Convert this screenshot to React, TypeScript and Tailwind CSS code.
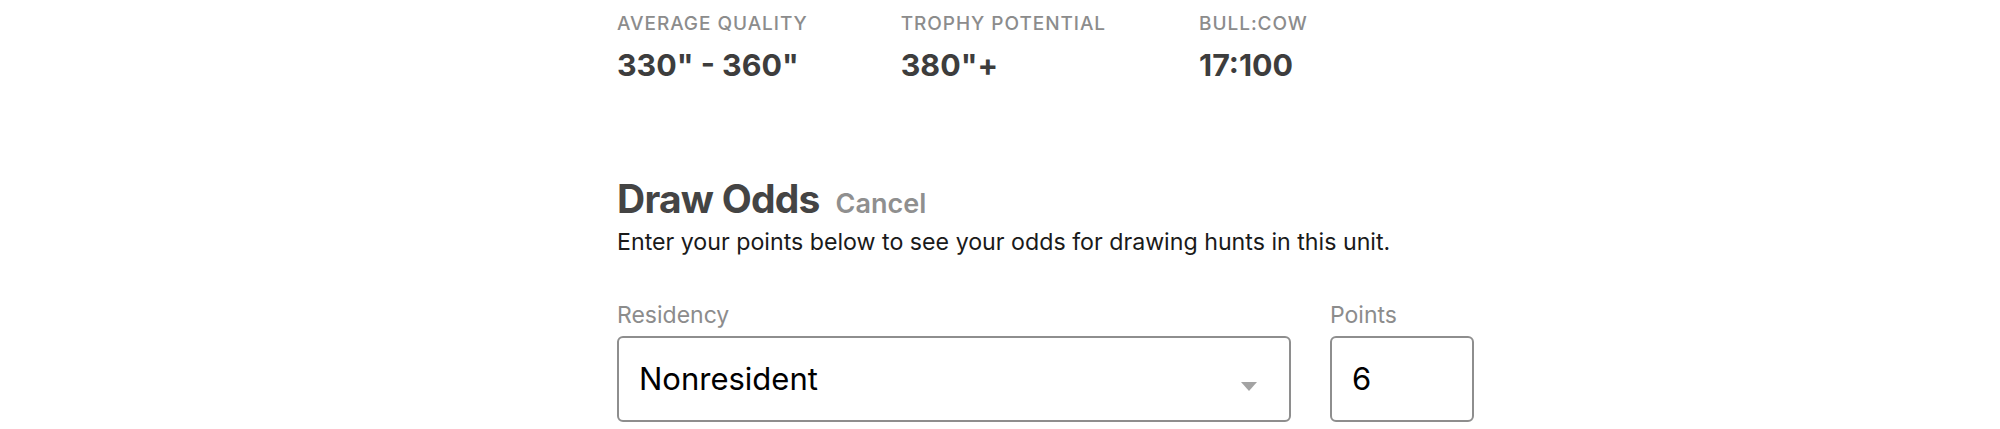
import React from 'react';

const stats = [
  { label: 'AVERAGE QUALITY', value: '330" - 360"' },
  { label: 'TROPHY POTENTIAL', value: '380"+' },
  { label: 'BULL:COW', value: '17:100' },
];

const App: React.FC = () => {
  return (
    <div className="w-full min-h-screen bg-white font-['Inter',sans-serif]">
      <div className="pl-[617px] pt-[14px]">
        {/* Stats */}
        <div className="flex flex-row gap-[93px]">
          {stats.map((s) => (
            <div key={s.label} className="flex flex-col">
              <div className="text-[19px] leading-[19px] font-medium tracking-[0.05em] text-[#8c8c8c]">
                {s.label}
              </div>
              <div className="mt-[17px] text-[30.4px] leading-[31px] font-bold text-[#3d3d3d]">
                {s.value}
              </div>
            </div>
          ))}
        </div>

        {/* Draw odds */}
        <div className="mt-[98px] flex flex-row items-baseline gap-[16px]">
          <h2 className="text-[39px] leading-[39px] font-bold tracking-[-0.02em] text-[#444444]">Draw Odds</h2>
          <span className="text-[27px] leading-[27px] font-semibold text-[#8f8f8f]">Cancel</span>
        </div>
        <p className="mt-[13px] text-[23.2px] leading-[23px] text-[#1a1a1a]">
          Enter your points below to see your odds for drawing hunts in this unit.
        </p>

        <div className="mt-[50px] flex flex-row gap-[39px]">
          <div className="flex flex-col w-[674px]">
            <label className="text-[23px] leading-[23px] text-[#8c8c8c]">Residency</label>
            <div className="mt-[9px] h-[86px] border-2 border-[#8e8e8e] rounded-[6px] flex flex-row items-center justify-between pl-[20px] pr-[32px]">
              <span className="text-[31px] text-black">Nonresident</span>
              <svg width="16" height="9" viewBox="0 0 16 9" className="mt-[14px]">
                <polygon points="0,0 16,0 8,9" fill="#a3a3a3" />
              </svg>
            </div>
          </div>
          <div className="flex flex-col w-[144px]">
            <label className="text-[23px] leading-[23px] text-[#8c8c8c]">Points</label>
            <div className="mt-[9px] h-[86px] border-2 border-[#8e8e8e] rounded-[6px] flex items-center pl-[20px]">
              <span className="text-[31px] text-black">6</span>
            </div>
          </div>
        </div>
      </div>
    </div>
  );
};

export default App;
